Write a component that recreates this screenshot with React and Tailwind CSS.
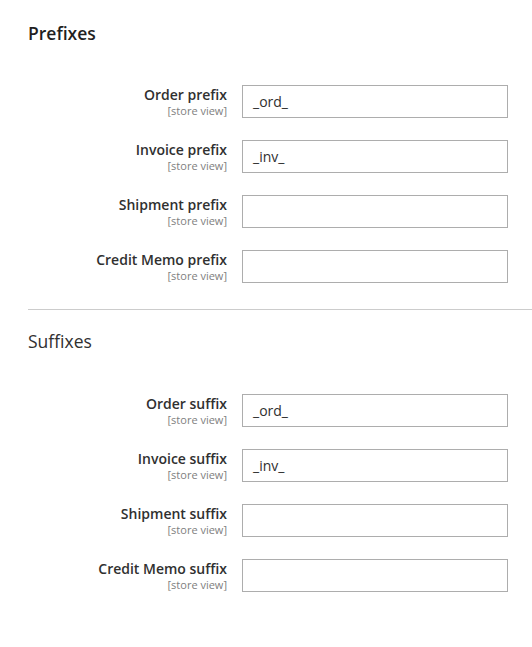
import React from "react";

const font = { fontFamily: '"Open Sans", "Noto Sans", sans-serif' };

function Row({ label, value }) {
  return (
    <div className="flex items-start gap-[15px] h-[33px]">
      <div className="w-[199px] text-right pt-[1px]">
        <div className="text-[14px] leading-[18px] font-semibold text-[#303030]">{label}</div>
        <div className="text-[11px] leading-[14px] text-[#808080]">[store view]</div>
      </div>
      <div className="w-[266px] h-[33px] border border-[#adadad] bg-white flex items-center pl-[10px] text-[14px] text-[#303030]">
        {value}
      </div>
    </div>
  );
}

function Section({ title, bold, rows, gapTop }) {
  return (
    <div>
      <h2 className={`text-[17.5px] leading-[20px] ${bold ? "font-semibold text-[#1f1f1f]" : "font-medium text-[#303030]"}`}>{title}</h2>
      <div className={`${gapTop} flex flex-col gap-[22px]`}>
        {rows.map((r) => (
          <Row key={r[0]} label={r[0]} value={r[1]} />
        ))}
      </div>
    </div>
  );
}

export default function App() {
  return (
    <div className="w-[532px] h-[647px] bg-white pl-[28px] pt-[23px]" style={font}>
      <Section
        title="Prefixes"
        bold
        gapTop="mt-[42px]"
        rows={[
          ["Order prefix", "_ord_"],
          ["Invoice prefix", "_inv_"],
          ["Shipment prefix", ""],
          ["Credit Memo prefix", ""],
        ]}
      />
      <div className="mt-[26px] h-px bg-[#cccccc]" />
      <div className="pt-[21px]">
        <Section
          title="Suffixes"
          gapTop="mt-[43px]"
          rows={[
            ["Order suffix", "_ord_"],
            ["Invoice suffix", "_inv_"],
            ["Shipment suffix", ""],
            ["Credit Memo suffix", ""],
          ]}
        />
      </div>
    </div>
  );
}
